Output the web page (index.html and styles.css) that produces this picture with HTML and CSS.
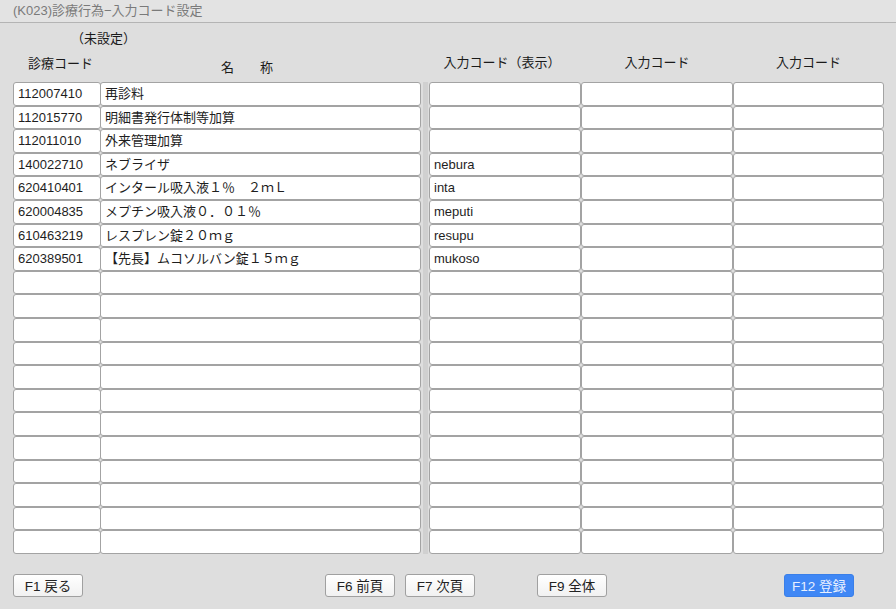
FILE: index.html
```html
<!DOCTYPE html>
<html lang="ja">
<head>
  <meta charset="UTF-8" />
  <title>(K023)診療行為−入力コード設定</title>
  <link rel="stylesheet" href="styles.css">
</head>
<body>
  <div class="titlebar">(K023)診療行為−入力コード設定</div>
  <div class="page">
    <div class="heads">
      <div class="head-left">
        <div class="unset">（未設定）</div>
        <div class="head-row">
          <span class="h-code">診療コード</span>
          <span class="h-name">名　　称</span>
        </div>
      </div>
      <div class="head-right">
        <span>入力コード（表示）</span>
        <span>入力コード</span>
        <span>入力コード</span>
      </div>
    </div>
    <div class="grid" id="grid"></div>
    <div class="footer">
      <button class="btn b1">F1 戻る</button>
      <button class="btn b6">F6 前頁</button>
      <button class="btn b7">F7 次頁</button>
      <button class="btn b9">F9 全体</button>
      <button class="btn b12 primary">F12 登録</button>
    </div>
  </div>
  <script>
    const rows = [
      ["112007410", "再診料", ""],
      ["112015770", "明細書発行体制等加算", ""],
      ["112011010", "外来管理加算", ""],
      ["140022710", "ネブライザ", "nebura"],
      ["620410401", "インタール吸入液１％　２ｍＬ", "inta"],
      ["620004835", "メプチン吸入液０．０１％", "meputi"],
      ["610463219", "レスプレン錠２０ｍｇ", "resupu"],
      ["620389501", "【先長】ムコソルバン錠１５ｍｇ", "mukoso"]
    ];
    const grid = document.getElementById("grid");
    let html = "";
    for (let i = 0; i < 20; i++) {
      const r = rows[i] || ["", "", ""];
      html += `<div class="cell">${r[0]}</div><div class="cell">${r[1]}</div><div class="sep"></div>` +
              `<div class="cell">${r[2]}</div><div class="cell"></div><div class="cell"></div>`;
    }
    grid.innerHTML = html;
  </script>
</body>
</html>
```

FILE: styles.css
```css
* { box-sizing: border-box; margin: 0; padding: 0; }
body {
  font-family: "Liberation Sans", "Noto Sans CJK JP", sans-serif;
  font-size: 13px;
  background: #dedede;
  color: #222;
  width: 896px;
  height: 609px;
  overflow: hidden;
}
.titlebar {
  height: 23px;
  padding: 2px 13px 0;
  color: #7a7a7a;
  font-size: 13px;
  line-height: 17px;
  background: #e3e3e3;
  border-bottom: 1px solid #b4b4b4;
}
.page { padding: 0 12px 0 13px; }

/* column headings */
.heads { display: flex; height: 59px; font-size: 13px; color: #1a1a1a; }
.head-left { width: 408px; }
.unset { padding: 7px 0 0 58px; line-height: 17px; }
.head-row { display: flex; align-items: flex-start; }
.h-code { margin: 8px 0 0 15px; line-height: 17px; }
.h-name { margin: 12px 0 0 128px; line-height: 17px; }
.head-right {
  display: grid;
  grid-template-columns: 152px 152px 151px;
  margin-left: 8px;
  padding-top: 31px;
  text-align: center;
  line-height: 17px;
  font-size: 13px;
}
.head-right span:first-child { padding-right: 6px; }

/* table */
.grid {
  display: grid;
  grid-template-columns: 88px 320px 8px 152px 152px 151px;
  grid-auto-rows: 23.6px;
}
.cell {
  background: #fff;
  border: 1px solid #a3a3a3;
  border-radius: 3px;
  padding: 0 4px;
  line-height: 21px;
  font-size: 13px;
  color: #1e1e1e;
  white-space: nowrap;
  overflow: hidden;
}
.grid .cell:nth-child(6n+2) { margin-left: -1px; }
.sep { background: #d0d0d0; margin: 0 1px 0 2px; }

/* function keys */
.footer { display: flex; margin-top: 20px; }
.btn {
  height: 23px;
  width: 70px;
  font-family: "Liberation Sans", "Noto Sans CJK JP", sans-serif;
  font-size: 13.5px;
  color: #222;
  background: linear-gradient(#ffffff, #f1f1f1);
  border: 1px solid #a0a0a0;
  border-radius: 3px;
}
.b6 { margin-left: 242px; }
.b7 { margin-left: 10px; }
.b9 { margin-left: 62px; }
.b12 { margin-left: 177px; }
.primary {
  background: #3f87f5;
  border-color: #3a7fe8;
  color: #e8f0ff;
}
```
